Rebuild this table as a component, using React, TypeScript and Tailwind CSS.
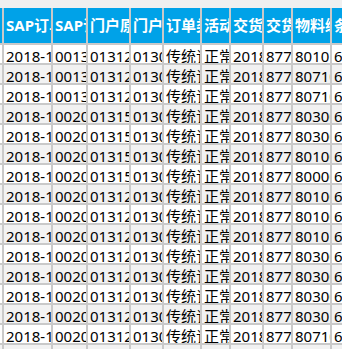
const cols = [
  { w: "w-[3px]", title: "" },
  { w: "w-[49px]", title: "SAP订单日期" },
  { w: "w-[35px]", title: "SAP订单号" },
  { w: "w-[43px]", title: "门户原单号" },
  { w: "w-[33px]", title: "门户订单号" },
  { w: "w-[38px]", title: "订单类型" },
  { w: "w-[29px]", title: "活动类型" },
  { w: "w-[33px]", title: "交货日期" },
  { w: "w-[29px]", title: "交货单号" },
  { w: "w-[39px]", title: "物料编码" },
  { w: "w-[60px]", title: "条码" },
];

const rows = [
  ["0013", "01312", "80101"],
  ["0013", "01312", "80710"],
  ["0013", "01312", "80710"],
  ["0020", "01315", "80300"],
  ["0020", "01315", "80300"],
  ["0020", "01315", "80100"],
  ["0020", "01315", "80000"],
  ["0020", "01312", "80100"],
  ["0020", "01312", "80100"],
  ["0020", "01312", "80101"],
  ["0020", "01312", "80300"],
  ["0020", "01312", "80300"],
  ["0020", "01312", "80300"],
  ["0020", "01312", "80301"],
  ["0020", "01312", "80710"],
  ["0020", "01312", "80710"],
];

const App = () => {
  return (
    <div
      className="w-[342px] h-[349px] overflow-hidden bg-white text-[15px] text-black"
      style={{ fontFamily: '"Noto Sans", "Noto Sans CJK SC", sans-serif' }}
    >
      <div className="h-[8px] bg-[#f0f0f0]" />
      <div className="flex h-[37px] bg-[#00a2e8] border-b-2 border-[#c9c9c9]">
        {cols.map((c, i) => (
          <div
            key={i}
            className={`${c.w} shrink-0 border-r-2 border-[#c9c9c9] overflow-hidden whitespace-nowrap pl-[2px] font-bold text-white leading-[35px]`}
          >
            {c.title}
          </div>
        ))}
      </div>
      {rows.map((r, ri) => {
        const cells = [
          "",
          "2018-10-12",
          r[0] + "100452",
          r[1] + "8842",
          "01302279",
          "传统订单",
          "正常",
          "2018-10-15",
          "87702214",
          r[2] + "0011",
          "6901234",
        ];
        return (
          <div
            key={ri}
            className={`flex h-[20px] shrink-0 border-b-2 border-[#c9c9c9] ${ri % 2 === 1 ? "bg-[#f2f2f2]" : "bg-white"}`}
          >
            {cells.map((t, ci) => (
              <div
                key={ci}
                className={`${cols[ci].w} shrink-0 border-r-2 border-[#c9c9c9] overflow-hidden whitespace-nowrap pl-[2px] leading-[18px] pt-[2px]`}
              >
                {t}
              </div>
            ))}
          </div>
        );
      })}
    </div>
  );
};

export default App;
